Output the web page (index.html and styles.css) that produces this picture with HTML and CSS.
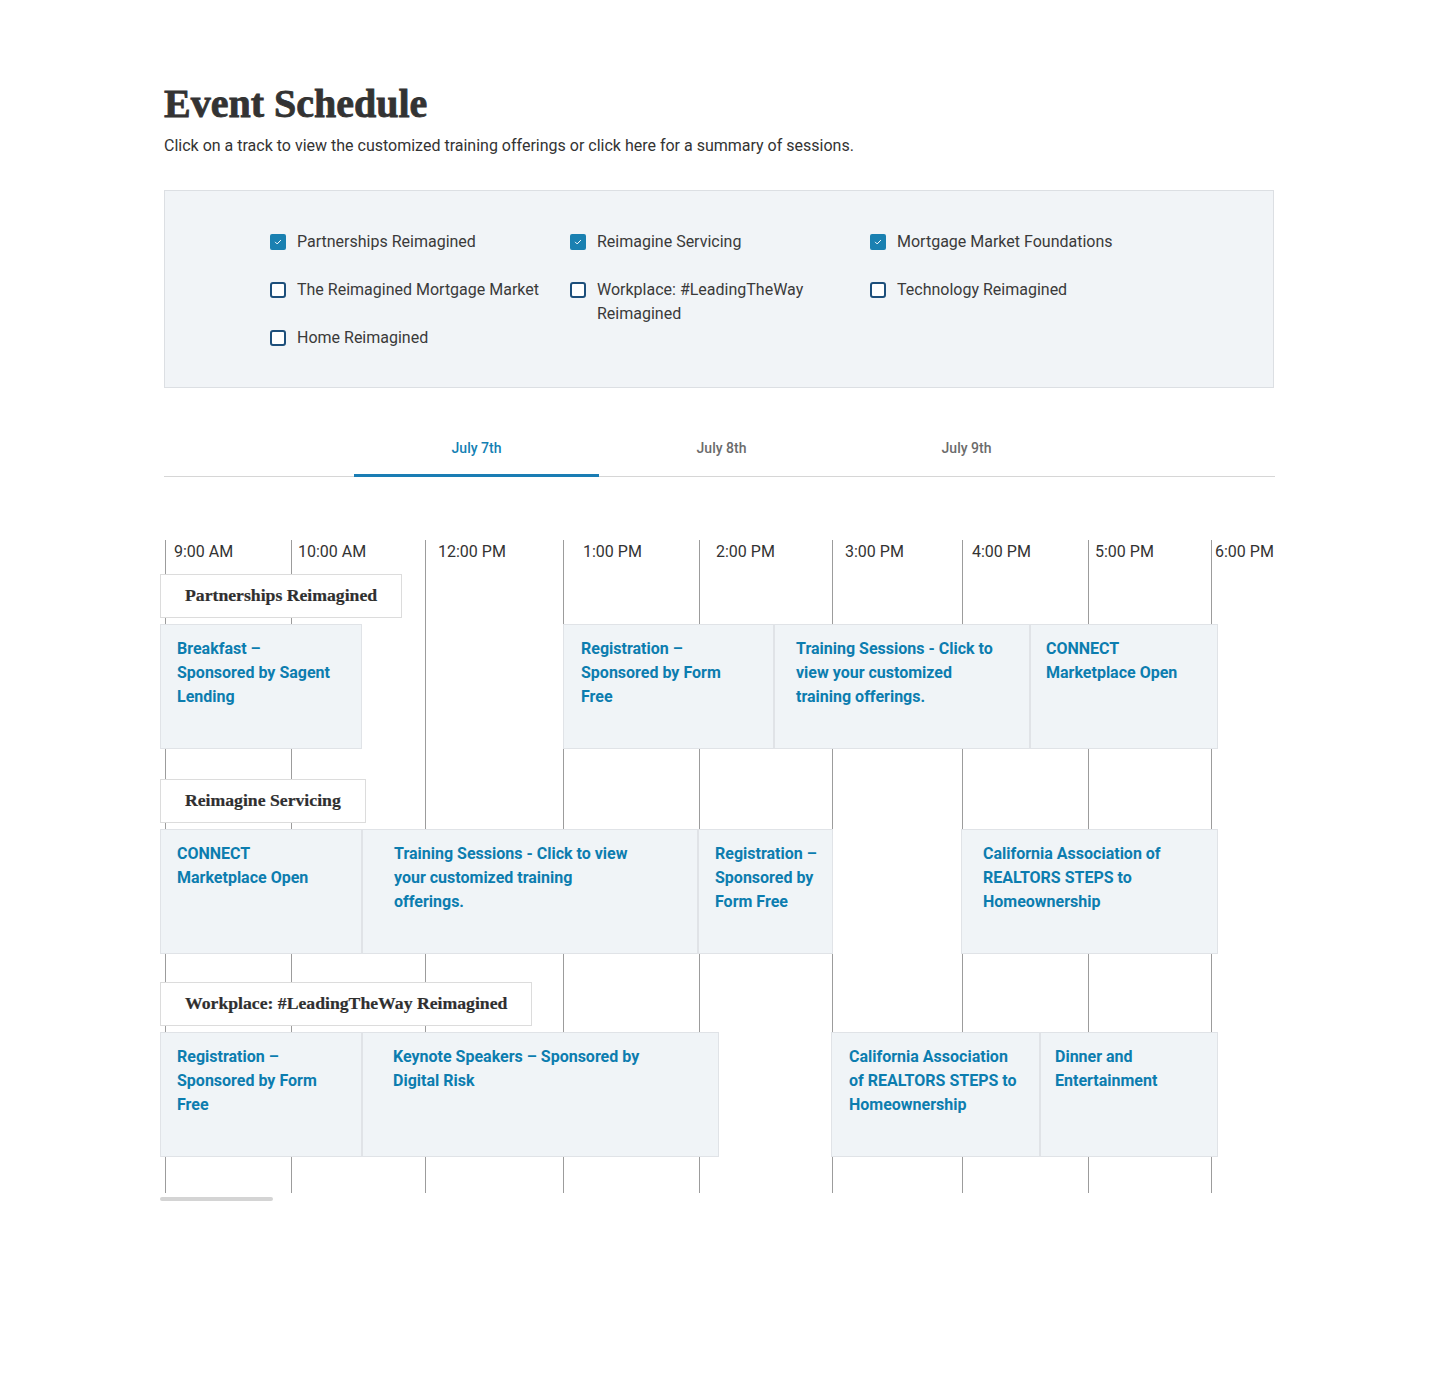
FILE: index.html
```html
<!DOCTYPE html>
<html lang="en">
<head>
<meta charset="utf-8">
<title>Event Schedule</title>
<link rel="stylesheet" href="styles.css">
</head>
<body>
<main class="page">
  <h1 class="title">Event Schedule</h1>
  <p class="intro">Click on a track to view the customized training offerings or click here for a summary of sessions.</p>

  <section class="filters">
    <div class="filter-col">
      <label class="filter"><span class="box checked"><svg viewBox="0 0 16 16"><path d="M4.5 8.2l2.4 2.4 4.6-4.8"/></svg></span><span>Partnerships Reimagined</span></label>
      <label class="filter"><span class="box"></span><span>The Reimagined Mortgage Market</span></label>
      <label class="filter"><span class="box"></span><span>Home Reimagined</span></label>
    </div>
    <div class="filter-col">
      <label class="filter"><span class="box checked"><svg viewBox="0 0 16 16"><path d="M4.5 8.2l2.4 2.4 4.6-4.8"/></svg></span><span>Reimagine Servicing</span></label>
      <label class="filter"><span class="box"></span><span>Workplace: #LeadingTheWay Reimagined</span></label>
    </div>
    <div class="filter-col">
      <label class="filter"><span class="box checked"><svg viewBox="0 0 16 16"><path d="M4.5 8.2l2.4 2.4 4.6-4.8"/></svg></span><span>Mortgage Market Foundations</span></label>
      <label class="filter"><span class="box"></span><span>Technology Reimagined</span></label>
    </div>
  </section>

  <nav class="tabs">
    <a class="tab active">July 7th</a>
    <a class="tab">July 8th</a>
    <a class="tab">July 9th</a>
  </nav>

  <section class="schedule">
    <div class="gridlines">
      <span class="vline" style="left:5px"></span>
      <span class="vline" style="left:131px"></span>
      <span class="vline" style="left:265px"></span>
      <span class="vline" style="left:403px"></span>
      <span class="vline" style="left:539px"></span>
      <span class="vline" style="left:672px"></span>
      <span class="vline" style="left:802px"></span>
      <span class="vline" style="left:928px"></span>
      <span class="vline" style="left:1051px"></span>
    </div>
    <div class="times">
      <span class="time" style="left:14px">9:00 AM</span>
      <span class="time" style="left:138px">10:00 AM</span>
      <span class="time" style="left:278px">12:00 PM</span>
      <span class="time" style="left:423px">1:00 PM</span>
      <span class="time" style="left:556px">2:00 PM</span>
      <span class="time" style="left:685px">3:00 PM</span>
      <span class="time" style="left:812px">4:00 PM</span>
      <span class="time" style="left:935px">5:00 PM</span>
      <span class="time" style="left:1055px">6:00 PM</span>
    </div>

    <div class="track">
      <div class="track-label">Partnerships Reimagined</div>
      <div class="events">
        <a class="event" style="left:0;width:202px;padding-left:16px">Breakfast –<br>Sponsored by Sagent<br>Lending</a>
        <a class="event" style="left:403px;width:211px;padding-left:17px">Registration –<br>Sponsored by Form<br>Free</a>
        <a class="event" style="left:614px;width:256px;padding-left:21px">Training Sessions - Click to<br>view your customized<br>training offerings.</a>
        <a class="event" style="left:870px;width:188px;padding-left:15px">CONNECT<br>Marketplace Open</a>
      </div>
    </div>

    <div class="track">
      <div class="track-label">Reimagine Servicing</div>
      <div class="events">
        <a class="event" style="left:0;width:202px;padding-left:16px">CONNECT<br>Marketplace Open</a>
        <a class="event" style="left:202px;width:336px;padding-left:31px">Training Sessions - Click to view<br>your customized training<br>offerings.</a>
        <a class="event" style="left:538px;width:135px;padding-left:16px">Registration –<br>Sponsored by<br>Form Free</a>
        <a class="event" style="left:801px;width:257px;padding-left:21px">California Association of<br>REALTORS STEPS to<br>Homeownership</a>
      </div>
    </div>

    <div class="track last">
      <div class="track-label">Workplace: #LeadingTheWay Reimagined</div>
      <div class="events">
        <a class="event" style="left:0;width:202px;padding-left:16px">Registration –<br>Sponsored by Form<br>Free</a>
        <a class="event" style="left:202px;width:357px;padding-left:30px">Keynote Speakers – Sponsored by<br>Digital Risk</a>
        <a class="event" style="left:671px;width:209px;padding-left:17px">California Association<br>of REALTORS STEPS to<br>Homeownership</a>
        <a class="event" style="left:880px;width:178px;padding-left:14px">Dinner and<br>Entertainment</a>
      </div>
    </div>

    <div class="scrollbar"><span class="thumb"></span></div>
  </section>
</main>
</body>
</html>
```

FILE: styles.css
```css
* { box-sizing: border-box; }

html, body {
  margin: 0;
  padding: 0;
  background: #ffffff;
}

body {
  font-family: Roboto, "Liberation Sans", Arial, sans-serif;
  color: #333333;
}

.page {
  width: 1111px;
  margin-left: 164px;
  padding-top: 80px;
  padding-bottom: 170px;
}

.title {
  margin: 0;
  font-family: "Liberation Serif", "DejaVu Serif", serif;
  font-weight: 700;
  font-size: 40px;
  line-height: 47px;
  color: #333333;
  -webkit-text-stroke: 0.8px #333333;
}

.intro {
  margin: 8px 0 0;
  font-size: 16px;
  line-height: 22px;
  color: #333333;
}

/* filter panel */
.filters {
  margin-top: 33px;
  width: 1110px;
  height: 198px;
  background: #f1f4f7;
  border: 1px solid #dcdfe3;
  display: flex;
  padding: 39px 0 0 105px;
}

.filter-col {
  width: 300px;
  display: flex;
  flex-direction: column;
  gap: 24px;
}

.filter {
  display: flex;
  align-items: flex-start;
  font-size: 16px;
  line-height: 24px;
  color: #3a3a3a;
  cursor: pointer;
}

.filter > span:last-child {
  max-width: 262px;
}

.box {
  flex: none;
  width: 16px;
  height: 16px;
  margin: 4px 11px 0 0;
  border: 2px solid #1d4f7b;
  border-radius: 3px;
  background: #ffffff;
  display: flex;
  align-items: center;
  justify-content: center;
}

.box.checked {
  background: #1a80b1;
  border-color: #1a80b1;
  border-radius: 2px;
}

.box svg {
  width: 14px;
  height: 14px;
  fill: none;
  stroke: #ffffff;
  stroke-width: 1.3;
  stroke-linecap: round;
  stroke-linejoin: round;
}

/* tabs */
.tabs {
  margin-top: 28px;
  display: flex;
  justify-content: center;
  padding-left: 4px;
  border-bottom: 1px solid #d6d6d6;
}

.tab {
  width: 245px;
  text-align: center;
  padding: 23px 0 17px;
  font-size: 14px;
  line-height: 18px;
  font-weight: 500;
  color: #6b6b6b;
  border-bottom: 3px solid transparent;
  margin-bottom: -1px;
  cursor: pointer;
}

.tab.active {
  color: #1380b3;
  border-bottom-color: #1a7db4;
}

/* schedule */
.schedule {
  position: relative;
  margin-top: 63px;
  margin-left: -4px;
  width: 1116px;
}

.gridlines {
  position: absolute;
  left: 0;
  top: 0;
  width: 100%;
  height: 653px;
}

.vline {
  position: absolute;
  top: 0;
  bottom: 0;
  width: 1px;
  background: #9c9c9c;
}

.times {
  position: relative;
  height: 34px;
}

.time {
  position: absolute;
  top: 2px;
  font-size: 16px;
  line-height: 20px;
  color: #333333;
  background: #ffffff;
  white-space: nowrap;
}

.track {
  position: relative;
  margin-bottom: 30px;
}

.track.last {
  margin-bottom: 0;
}

.track:nth-child(4) {
  margin-bottom: 28px;
}

.track-label {
  display: inline-block;
  height: 44px;
  padding: 0 24px;
  background: #ffffff;
  border: 1px solid #dcdcdc;
  font-family: "Liberation Serif", "DejaVu Serif", serif;
  font-weight: 700;
  font-size: 17.7px;
  line-height: 41px;
  color: #2f2f2f;
  -webkit-text-stroke: 0.2px #2f2f2f;
  position: relative;
}

.events {
  position: relative;
  height: 125px;
  margin-top: 6px;
}

.event {
  position: absolute;
  top: 0;
  height: 125px;
  padding-top: 12px;
  background: #f0f4f7;
  border: 1px solid #e0e3e7;
  font-size: 16px;
  line-height: 24px;
  font-weight: 700;
  color: #0c7daf;
  text-decoration: none;
  cursor: pointer;
}

.scrollbar {
  position: relative;
  height: 40px;
}

.thumb {
  position: absolute;
  left: 0;
  top: 40px;
  width: 113px;
  height: 4px;
  border-radius: 2px;
  background: #d4d4d4;
}
```
